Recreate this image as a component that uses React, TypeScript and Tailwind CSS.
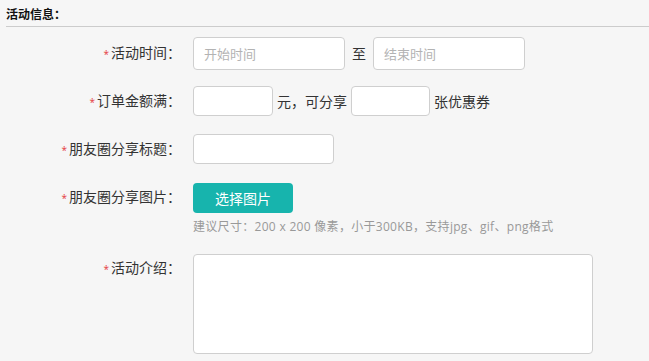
import React from 'react';

const Label = ({ text }: { text: string }) => (
	<div className="w-[193px] shrink-0 pr-[12px] text-right text-[14px] leading-[20px] text-[#333]">
		<span className="mr-[2px] text-[10px] text-[#e4393c]">*</span>
		{text}：
	</div>
);

const inputCls =
	'rounded-[4px] border border-[#cfcfcf] bg-white px-[10px] text-[13px] text-[#333] placeholder:text-[#b3b3b3] outline-none';

export default function App() {
	return (
		<div
			className="min-h-[361px] w-[649px] bg-[#f6f6f6] text-[#333]"
			style={{ fontFamily: '"Open Sans", "Noto Sans CJK SC", sans-serif' }}
		>
			<div className="pl-[6px] pt-[6px]">
				<div className="border-b border-[#cccccc] pb-[3px] text-[12px] font-bold leading-[17px] text-[#111]">
					活动信息：
				</div>
			</div>

			<div className="mt-[10px] flex items-center">
				<Label text="活动时间" />
				<input className={`${inputCls} h-[33px] w-[152px]`} placeholder="开始时间" />
				<span className="mx-[7px] text-[14px]">至</span>
				<input className={`${inputCls} h-[33px] w-[152px]`} placeholder="结束时间" />
			</div>

			<div className="mt-[16px] flex items-center">
				<Label text="订单金额满" />
				<input className={`${inputCls} h-[30px] w-[80px]`} />
				<span className="mx-[4px] text-[14px]">元，可分享</span>
				<input className={`${inputCls} h-[30px] w-[79px]`} />
				<span className="ml-[4px] text-[14px]">张优惠券</span>
			</div>

			<div className="mt-[18px] flex items-center">
				<Label text="朋友圈分享标题" />
				<input className={`${inputCls} h-[30px] w-[141px]`} />
			</div>

			<div className="mt-[19px] flex items-start">
				<div className="pt-[4px]">
					<Label text="朋友圈分享图片" />
				</div>
				<div>
					<button className="h-[30px] w-[100px] rounded-[4px] bg-[#17b4ad] text-[14px] text-white">
						选择图片
					</button>
					<div className="mt-[5px] text-[12px] leading-[18px] tracking-[0.3px] text-[#999]">
						建议尺寸：200 x 200 像素，小于300KB，支持jpg、gif、png格式
					</div>
				</div>
			</div>

			<div className="mt-[18px] flex items-start">
				<div className="pt-[4px]">
					<Label text="活动介绍" />
				</div>
				<textarea className={`${inputCls} h-[100px] w-[400px] resize-none`} />
			</div>
		</div>
	);
}
